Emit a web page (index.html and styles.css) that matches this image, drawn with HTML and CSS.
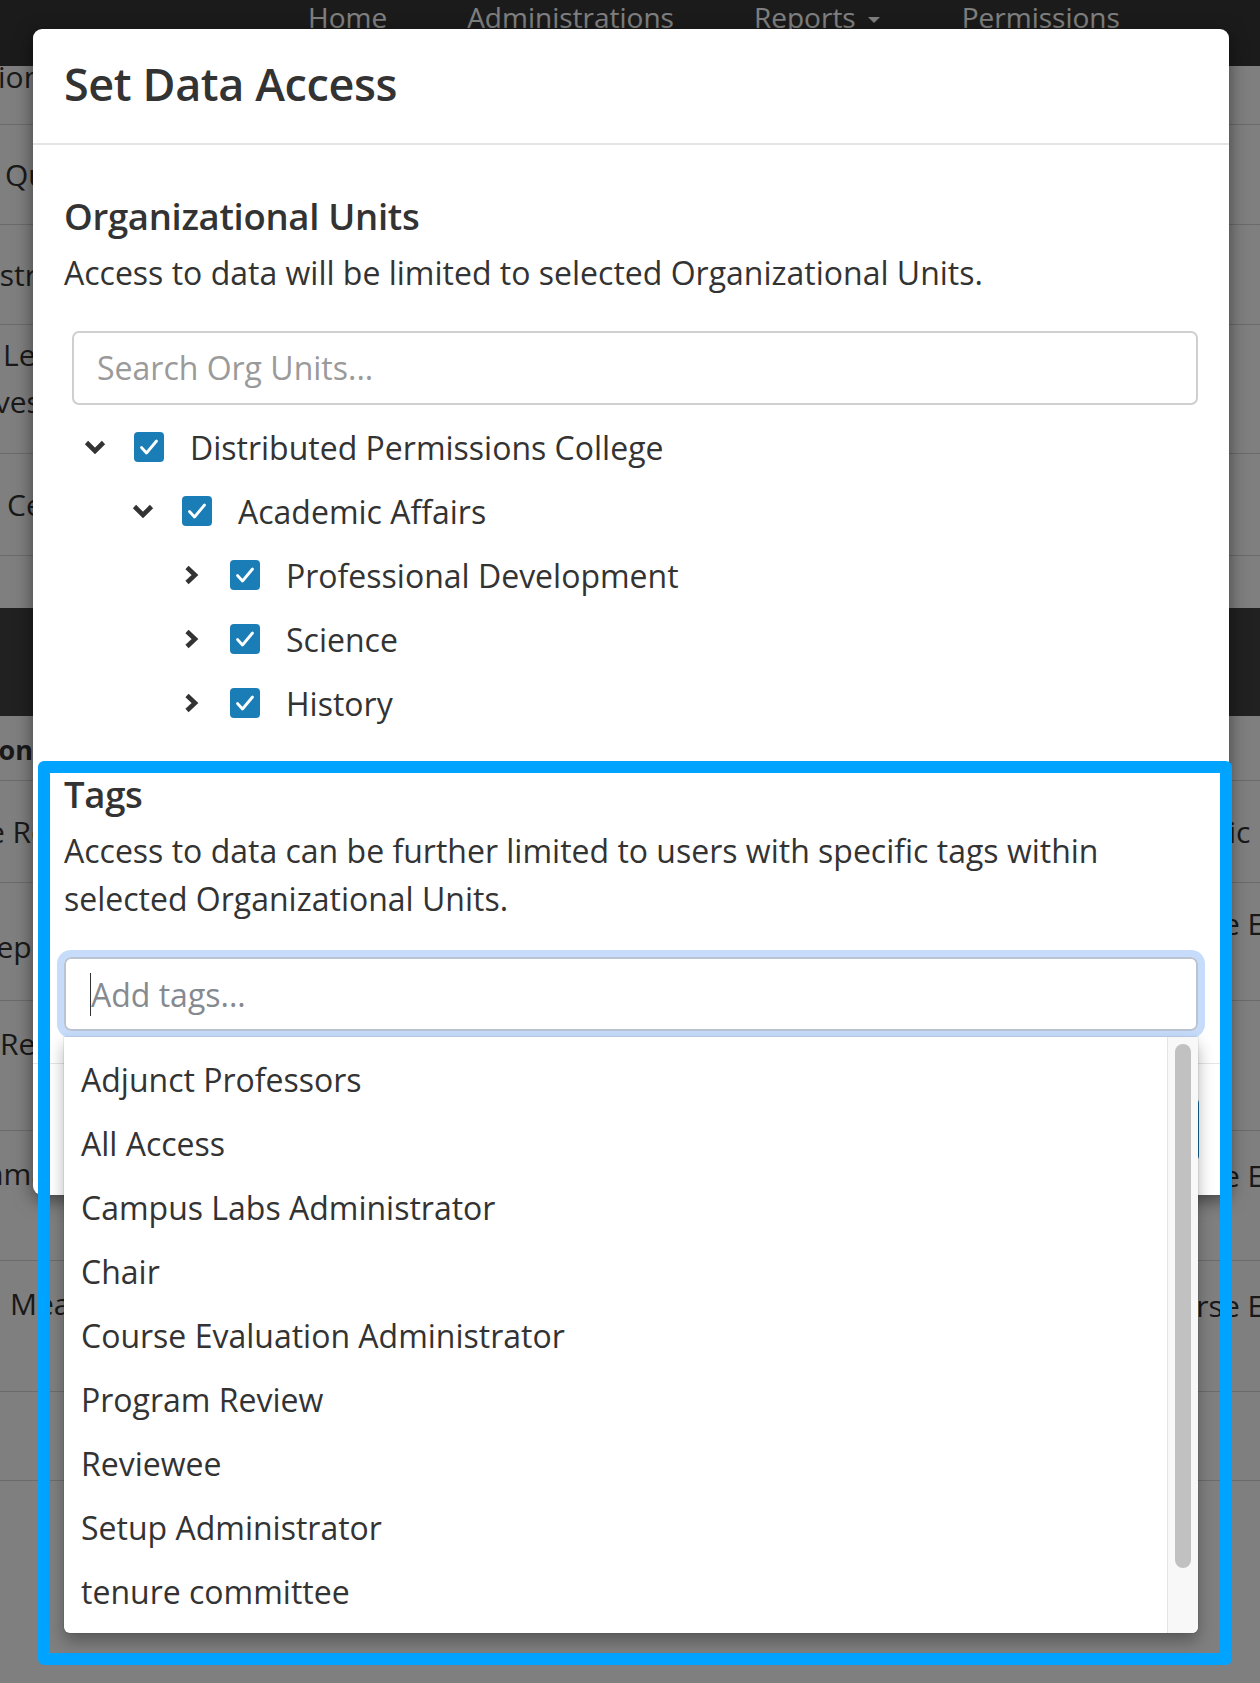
FILE: index.html
```html
<!DOCTYPE html>
<html lang="en">
<head>
<meta charset="utf-8">
<title>Set Data Access</title>
<link rel="stylesheet" href="styles.css">
</head>
<body>
<div class="page">
  <header class="topnav">
    <a class="navlink">Home</a>
    <a class="navlink">Administrations</a>
    <a class="navlink">Reports <span class="caret"></span></a>
    <a class="navlink">Permissions</a>
  </header>
  <div class="rows">
    <div class="row r1"><span class="lc i-ion">Action</span></div>
    <div class="row r2"><span class="lc i-qu">Questions</span></div>
    <div class="row r3"><span class="lc i-str">Instructor</span></div>
    <div class="row r4"><span class="lc two"><span class="ln i-le">Learning</span><span class="ln i-ves">Objectives</span></span></div>
    <div class="row r5"><span class="lc i-ce">Center</span></div>
    <div class="row r6"></div>
    <div class="band"></div>
    <div class="row r7"><span class="lc bold i-ons">Actions</span></div>
    <div class="row r8"><span class="lc i-er">Course Reports</span><span class="rc">Graphic Design</span></div>
    <div class="row r9"><span class="lc i-ep">Reports</span><span class="rc">Course Evaluation</span></div>
    <div class="row r10"><span class="lc i-rep">Reports</span></div>
    <div class="row r11"><span class="lc i-m">Summary</span><span class="rc">Course Evaluation</span></div>
    <div class="row r12"><span class="lc i-me">Measures</span><span class="rc">Course Evaluation</span></div>
    <div class="row r13"></div>
  </div>
</div>

<div class="backdrop"></div>

<div class="modal">
  <div class="modal-header">
    <h1 class="modal-title">Set Data Access</h1>
  </div>
  <div class="modal-body">
    <h2 class="section-title">Organizational Units</h2>
    <p class="section-text">Access to data will be limited to selected Organizational Units.</p>
    <div class="search-input">Search Org Units...</div>
    <ul class="tree">
      <li class="tree-row lvl0">
        <span class="chev"><svg width="22" height="14" viewBox="0 0 22 14"><polyline points="2.5,2.5 11,11 19.5,2.5" fill="none" stroke="#333" stroke-width="4.6"/></svg></span>
        <span class="cbox"><svg width="30" height="30" viewBox="0 0 30 30"><rect width="30" height="30" rx="4" fill="#1a7db5"/><polyline points="7.5,15.5 12.5,21 22.5,9" fill="none" stroke="#fff" stroke-width="2.8" stroke-linecap="round" stroke-linejoin="round"/></svg></span>
        <span class="tree-label">Distributed Permissions College</span>
      </li>
      <li class="tree-row lvl1">
        <span class="chev"><svg width="22" height="14" viewBox="0 0 22 14"><polyline points="2.5,2.5 11,11 19.5,2.5" fill="none" stroke="#333" stroke-width="4.6"/></svg></span>
        <span class="cbox"><svg width="30" height="30" viewBox="0 0 30 30"><rect width="30" height="30" rx="4" fill="#1a7db5"/><polyline points="7.5,15.5 12.5,21 22.5,9" fill="none" stroke="#fff" stroke-width="2.8" stroke-linecap="round" stroke-linejoin="round"/></svg></span>
        <span class="tree-label">Academic Affairs</span>
      </li>
      <li class="tree-row lvl2">
        <span class="chev"><svg width="15" height="20" viewBox="0 0 15 20"><polyline points="3,2.5 11,10 3,17.5" fill="none" stroke="#333" stroke-width="4.6"/></svg></span>
        <span class="cbox"><svg width="30" height="30" viewBox="0 0 30 30"><rect width="30" height="30" rx="4" fill="#1a7db5"/><polyline points="7.5,15.5 12.5,21 22.5,9" fill="none" stroke="#fff" stroke-width="2.8" stroke-linecap="round" stroke-linejoin="round"/></svg></span>
        <span class="tree-label">Professional Development</span>
      </li>
      <li class="tree-row lvl2">
        <span class="chev"><svg width="15" height="20" viewBox="0 0 15 20"><polyline points="3,2.5 11,10 3,17.5" fill="none" stroke="#333" stroke-width="4.6"/></svg></span>
        <span class="cbox"><svg width="30" height="30" viewBox="0 0 30 30"><rect width="30" height="30" rx="4" fill="#1a7db5"/><polyline points="7.5,15.5 12.5,21 22.5,9" fill="none" stroke="#fff" stroke-width="2.8" stroke-linecap="round" stroke-linejoin="round"/></svg></span>
        <span class="tree-label">Science</span>
      </li>
      <li class="tree-row lvl2">
        <span class="chev"><svg width="15" height="20" viewBox="0 0 15 20"><polyline points="3,2.5 11,10 3,17.5" fill="none" stroke="#333" stroke-width="4.6"/></svg></span>
        <span class="cbox"><svg width="30" height="30" viewBox="0 0 30 30"><rect width="30" height="30" rx="4" fill="#1a7db5"/><polyline points="7.5,15.5 12.5,21 22.5,9" fill="none" stroke="#fff" stroke-width="2.8" stroke-linecap="round" stroke-linejoin="round"/></svg></span>
        <span class="tree-label">History</span>
      </li>
    </ul>

    <h2 class="section-title tags-title">Tags</h2>
    <p class="section-text">Access to data can be further limited to users with specific tags within selected Organizational Units.</p>
    <div class="tags-wrap">
      <div class="tags-input"><span class="caret-line"></span><span class="placeholder">Add tags...</span></div>
      <div class="dropdown">
        <ul class="dd-list">
          <li class="dd-item">Adjunct Professors</li>
          <li class="dd-item">All Access</li>
          <li class="dd-item">Campus Labs Administrator</li>
          <li class="dd-item">Chair</li>
          <li class="dd-item">Course Evaluation Administrator</li>
          <li class="dd-item">Program Review</li>
          <li class="dd-item">Reviewee</li>
          <li class="dd-item">Setup Administrator</li>
          <li class="dd-item">tenure committee</li>
        </ul>
        <div class="dd-track"><div class="dd-thumb"></div></div>
      </div>
    </div>
  </div>
  <div class="modal-footer">
    <button class="btn btn-default">Cancel</button>
    <button class="btn btn-primary">Save</button>
  </div>
</div>

<div class="annot"></div>
</body>
</html>
```

FILE: styles.css
```css
* { box-sizing: border-box; }

html, body {
  margin: 0;
  padding: 0;
}

body {
  width: 1260px;
  height: 1683px;
  overflow: hidden;
  position: relative;
  font-family: "Open Sans", "Noto Sans", sans-serif;
  color: #333;
  background: #fff;
}

/* ---------- background page ---------- */
.page {
  width: 1260px;
}

.topnav {
  height: 66px;
  background: #373737;
  display: flex;
  padding-left: 268px;
}

.navlink {
  color: #fff;
  font-size: 28px;
  line-height: 34px;
  padding: 0 40px;
  display: flex;
  align-items: flex-start;
  white-space: nowrap;
}

.navlink:last-child { margin-left: 2px; }

.caret {
  display: inline-block;
  width: 0;
  height: 0;
  border-top: 6px solid #fff;
  border-left: 6px solid transparent;
  border-right: 6px solid transparent;
  margin-left: 12px;
  margin-top: 17px;
}

.rows {
  font-size: 30px;
  color: #333;
}

.row {
  display: flex;
  align-items: center;
  border-bottom: 1px solid #d6d6d6;
  white-space: nowrap;
  overflow: hidden;
}

.r1 { height: 59px; align-items: flex-start; }
.r2 { height: 100px; }
.r3 { height: 100px; }
.r4 { height: 129px; }
.r5 { height: 102px; }
.r6 { height: 52px; border-bottom: none; }
.band { height: 108px; background: #434343; }
.r7 { height: 65px; align-items: flex-start; }
.r8 { height: 102px; }
.r9 { height: 118px; }
.r10 { height: 130px; align-items: flex-start; }
.r11 { height: 130px; align-items: flex-start; }
.r12 { height: 131px; align-items: flex-start; }
.r13 { height: 89px; }

.lc { display: block; line-height: 40px; }
.lc.two { display: flex; flex-direction: column; line-height: 47px; margin-top: -22px; }
.ln { display: block; }
.bold { font-weight: 700; font-size: 27px; }

.i-ion { margin-left: -46px; margin-top: -9px; }
.i-qu { margin-left: 5px; }
.i-str { margin-left: -27px; }
.i-le { margin-left: 3px; }
.i-ves { margin-left: -104px; }
.i-ce { margin-left: 7px; }
.i-ons { margin-left: -54px; margin-top: 14px; }
.i-er { margin-left: -94px; }
.i-ep { margin-left: -22px; margin-top: 10px; }
.i-rep { margin-left: 0; margin-top: 23px; }
.i-m { margin-left: -59px; margin-top: 23px; }
.i-me { margin-left: 10px; margin-top: 23px; }

.rc {
  margin-left: auto;
  width: 119px;
  flex: none;
  overflow: visible;
  line-height: 40px;
}
.r9 .rc { margin-top: -36px; }
.r11 .rc, .r12 .rc { margin-top: 25px; }

.backdrop {
  position: absolute;
  inset: 0;
  background: rgba(0, 0, 0, 0.5);
}

/* ---------- modal ---------- */
.modal {
  position: absolute;
  left: 33px;
  top: 29px;
  width: 1196px;
  background: #fff;
  border-radius: 9px;
  box-shadow: 0 5px 18px rgba(0, 0, 0, 0.5);
}

.modal-header {
  padding: 30px 31px 34px;
  border-bottom: 2px solid #e5e5e5;
}

.modal-title {
  margin: 0;
  font-size: 45px;
  line-height: 50px;
  font-weight: 600;
  color: #333;
  letter-spacing: -0.4px;
}

.modal-body {
  padding: 0 31px 32px;
}

.section-title {
  margin: 48px 0 0;
  font-size: 36.5px;
  line-height: 46px;
  font-weight: 600;
  color: #333;
  letter-spacing: -0.3px;
}

.tags-title { margin-top: 36px; }

.section-text {
  margin: 10px 0 0;
  font-size: 32px;
  line-height: 48px;
  color: #333;
}

.search-input {
  margin: 34px 0 0 8px;
  height: 74px;
  border: 2px solid #cfcfcf;
  border-radius: 7px;
  padding: 0 23px;
  font-size: 32px;
  line-height: 70px;
  color: #9a9a9a;
}

.tree {
  list-style: none;
  margin: 10px 0 0;
  padding: 0;
}

.tree-row {
  height: 64px;
  display: flex;
  align-items: center;
  font-size: 32px;
}

.lvl0 { padding-left: 12px; }
.lvl1 { padding-left: 60px; }
.lvl2 { padding-left: 108px; }

.chev {
  width: 38px;
  height: 30px;
  display: flex;
  align-items: center;
  justify-content: center;
  flex: none;
}
.chev svg { display: block; }

.cbox {
  margin-left: 20px;
  width: 30px;
  height: 30px;
  flex: none;
}
.cbox svg { display: block; }

.tree-label {
  margin-left: 26px;
  color: #333;
  white-space: nowrap;
}

.tags-wrap {
  position: relative;
  margin-top: 34px;
}

.tags-input {
  height: 74px;
  border: 2px solid #b9c3d1;
  border-radius: 7px;
  box-shadow: 0 0 0 7px #c6dcfa;
  padding: 0 24px;
  display: flex;
  align-items: center;
  font-size: 32px;
  color: #858a90;
}

.caret-line {
  width: 0;
  height: 43px;
  border-left: 1.5px solid #333;
  margin-right: 0;
}

.dropdown {
  position: absolute;
  left: 0;
  right: 0;
  top: calc(100% + 6px);
  height: 596px;
  background: #fff;
  border-radius: 0 0 6px 6px;
  box-shadow: 0 8px 16px rgba(0, 0, 0, 0.3), 0 0 0 1px rgba(0, 0, 0, 0.06);
  display: flex;
  overflow: hidden;
  z-index: 2;
}

.dd-list {
  list-style: none;
  margin: 0;
  padding: 11px 0 0;
  flex: 1;
}

.dd-item {
  height: 64px;
  line-height: 64px;
  padding: 0 16px 0 17px;
  font-size: 32px;
  color: #333;
  white-space: nowrap;
}

.dd-track {
  width: 31px;
  flex: none;
  background: #f8f8f8;
  border-left: 1px solid #e4e4e4;
  padding-top: 7px;
}

.dd-thumb {
  width: 16px;
  height: 524px;
  margin-left: 7px;
  border-radius: 8px;
  background: #c1c1c1;
}

.modal-footer {
  border-top: 1px solid #e5e5e5;
  padding: 33px 30px 33px;
  display: flex;
  justify-content: flex-end;
  gap: 12px;
}

.btn {
  height: 65px;
  padding: 0 30px;
  font-family: "Open Sans", sans-serif;
  font-size: 30px;
  border-radius: 6px;
}

.btn-default {
  background: #fff;
  border: 2px solid #ccc;
  color: #333;
}

.btn-primary {
  background: #1b72a4;
  border: 2px solid #176797;
  color: #fff;
}

/* ---------- annotation ---------- */
.annot {
  position: absolute;
  left: 38px;
  top: 761px;
  width: 1194px;
  height: 904px;
  border: 12px solid #00a3ff;
  border-radius: 6px;
  pointer-events: none;
}
```
